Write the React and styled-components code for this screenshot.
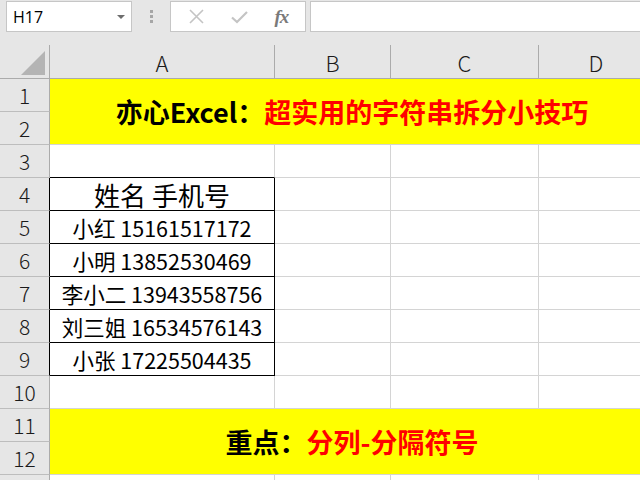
import styled, { createGlobalStyle } from "styled-components";

const GlobalStyle = createGlobalStyle`
  html, body {
    margin: 0;
    padding: 0;
    background: #e6e6e6;
  }
  * {
    box-sizing: border-box;
  }
`;

const CJK = `"Noto Sans CJK SC", "Noto Sans", sans-serif`;

const Window = styled.div`
  width: 640px;
  height: 480px;
  overflow: hidden;
  background: #e6e6e6;
  font-family: ${CJK};
`;

const FormulaBar = styled.div`
  height: 45px;
  padding-top: 1px;
  display: flex;
  align-items: flex-start;
`;

const NameBox = styled.div`
  margin-left: 6px;
  width: 126px;
  height: 31px;
  background: #fff;
  border: 1px solid #c6c6c6;
  display: flex;
  align-items: center;
  justify-content: space-between;
  padding: 0 6px 0 6px;
  font-family: "Open Sans", "Noto Sans", sans-serif;
  font-size: 16px;
  color: #000;
`;

const Caret = styled.span`
  width: 0;
  height: 0;
  border-left: 4px solid transparent;
  border-right: 4px solid transparent;
  border-top: 4px solid #6d6d6d;
`;

const Grip = styled.div`
  width: 38px;
  height: 31px;
  display: flex;
  flex-direction: column;
  align-items: center;
  justify-content: center;
  gap: 2px;

  span {
    width: 3px;
    height: 3px;
    background: #a6a6a6;
  }
`;

const ButtonBox = styled.div`
  width: 136px;
  height: 31px;
  background: #fff;
  border: 1px solid #c6c6c6;
  display: flex;
  align-items: center;
  justify-content: space-around;
  padding: 0 4px;
`;

const Fx = styled.span`
  font-family: "Liberation Serif", serif;
  font-style: italic;
  font-weight: 700;
  font-size: 19px;
  color: #7a7a7a;
  letter-spacing: -1px;
`;

const FormulaInput = styled.div`
  flex: 1;
  margin-left: 4px;
  height: 31px;
  background: #fff;
  border: 1px solid #c6c6c6;
  border-right: none;
`;

const Sheet = styled.div`
  display: grid;
  grid-template-columns: 50px 225px 116px 148px 115px;
  grid-template-rows: 34px repeat(13, 33px);
  background: #fff;
`;

const Corner = styled.div`
  background: #e6e6e6;
  border-right: 1px solid #ababab;
  border-bottom: 1px solid #ababab;
  position: relative;

  &::after {
    content: "";
    position: absolute;
    right: 4px;
    bottom: 3px;
    width: 0;
    height: 0;
    border-left: 24px solid transparent;
    border-bottom: 24px solid #b4b4b4;
  }
`;

const ColHead = styled.div`
  background: #e6e6e6;
  border-bottom: 1px solid #ababab;
  border-right: 1px solid ${(p) => (p.$last ? "transparent" : "#ababab")};
  display: flex;
  align-items: center;
  justify-content: center;
  font-size: 22px;
  font-weight: 300;
  color: #1a1a1a;
  padding-top: 1px;
`;

const RowHead = styled.div`
  background: #e6e6e6;
  border-right: 1px solid ${(p) => (p.$dark ? "#000" : "#ababab")};
  border-bottom: 1px solid #bdbdbd;
  display: flex;
  align-items: center;
  justify-content: center;
  font-size: 21px;
  font-weight: 300;
  color: #1a1a1a;
`;

const Cell = styled.div`
  border-right: 1px solid ${(p) => (p.$boxed ? "#000" : "#d4d4d4")};
  border-bottom: 1px solid
    ${(p) => (p.$boxed || p.$edge ? "#000" : "#d4d4d4")};
  display: flex;
  align-items: center;
  justify-content: center;
  font-size: ${(p) => (p.$big ? "26px" : "21.5px")};
  color: #000;
  white-space: nowrap;
`;

const Banner = styled.div`
  grid-column: 2 / span 4;
  grid-row: span 2;
  background: #ffff00;
  border-bottom: 1px solid #d4d4d4;
  display: flex;
  align-items: center;
  justify-content: center;
  font-size: 27px;
  font-weight: 700;
  color: #000;
  white-space: nowrap;
`;

const Red = styled.span`
  color: #ff0000;
`;

const XIcon = () => (
  <svg width="17" height="17" viewBox="0 0 17 17">
    <path d="M2 2 L15 15 M15 2 L2 15" stroke="#c4c4c4" strokeWidth="1.6" fill="none" />
  </svg>
);

const CheckIcon = () => (
  <svg width="19" height="16" viewBox="0 0 19 16">
    <path d="M2 8.5 L7 13 L17 3" stroke="#c4c4c4" strokeWidth="2.2" fill="none" />
  </svg>
);

const people = [
  "小红 15161517172",
  "小明 13852530469",
  "李小二 13943558756",
  "刘三姐 16534576143",
  "小张 17225504435",
];

const columns = ["A", "B", "C", "D"];

const EmptyCells = ({ from = 0 }) =>
  columns.slice(from).map((c) => <Cell key={c} />);

const App = () => {
  return (
    <Window>
      <GlobalStyle />
      <FormulaBar>
        <NameBox>
          H17
          <Caret />
        </NameBox>
        <Grip>
          <span />
          <span />
          <span />
        </Grip>
        <ButtonBox>
          <XIcon />
          <CheckIcon />
          <Fx>fx</Fx>
        </ButtonBox>
        <FormulaInput />
      </FormulaBar>

      <Sheet>
        <Corner />
        {columns.map((c, i) => (
          <ColHead key={c} $last={i === columns.length - 1}>
            {c}
          </ColHead>
        ))}

        <RowHead>1</RowHead>
        <Banner>
          亦心Excel：<Red>超实用的字符串拆分小技巧</Red>
        </Banner>
        <RowHead>2</RowHead>

        <RowHead>3</RowHead>
        <Cell $edge />
        <EmptyCells from={1} />

        <RowHead $dark>4</RowHead>
        <Cell $boxed $big>
          姓名 手机号
        </Cell>
        <EmptyCells from={1} />

        {people.map((p, i) => (
          <>
            <RowHead key={`h${i}`} $dark>
              {i + 5}
            </RowHead>
            <Cell key={`a${i}`} $boxed>
              {p}
            </Cell>
            <Cell key={`b${i}`} />
            <Cell key={`c${i}`} />
            <Cell key={`d${i}`} />
          </>
        ))}

        <RowHead>10</RowHead>
        <EmptyCells />

        <RowHead>11</RowHead>
        <Banner>
          重点：<Red>分列-分隔符号</Red>
        </Banner>
        <RowHead>12</RowHead>

        {/* row 13 starts at the very bottom edge, its label is out of view */}
        <RowHead />
        <EmptyCells />
      </Sheet>
    </Window>
  );
};

export default App;
